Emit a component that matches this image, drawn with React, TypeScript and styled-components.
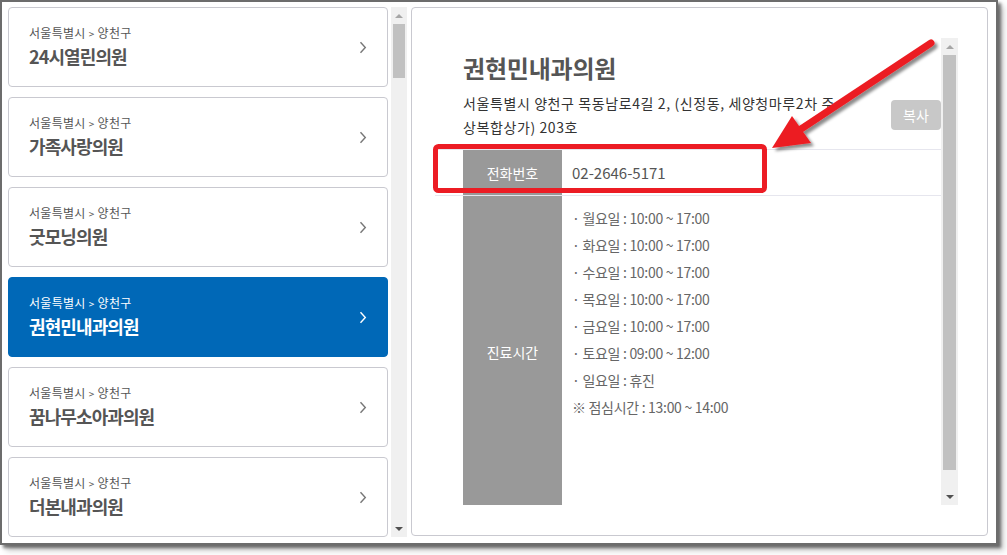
import React from 'react';
import styled, { createGlobalStyle } from 'styled-components';

const GlobalStyle = createGlobalStyle`
    * {
        box-sizing: border-box;
    }
    body {
        margin: 0;
        background: #fff;
        font-family: "Noto Sans CJK KR", "Noto Sans", sans-serif;
    }
`;

const Page = styled.div`
    position: relative;
    width: 1007px;
    height: 555px;
    overflow: hidden;
`;

const Frame = styled.div`
    width: 998px;
    height: 545px;
    border: 2px solid #6c6c6c;
    background: #fff;
    box-shadow: 3px 3px 3px rgba(0,0,0,0.5), 6px 6px 6px rgba(0,0,0,0.18);
    display: flex;
    align-items: flex-start;
    padding: 5px 0 0 6px;
    overflow: hidden;
`;

const ListColumn = styled.div`
    display: flex;
    height: 530px;
    overflow: hidden;
`;

const CardList = styled.div`
    width: 380px;
    display: flex;
    flex-direction: column;
    gap: 10px;
`;

const Card = styled.div<{ $active?: boolean }>`
    flex: 0 0 80px;
    border: 1px solid ${p => (p.$active ? '#0068b7' : '#c9c9d0')};
    border-radius: 4px;
    background: ${p => (p.$active ? '#0068b7' : '#fff')};
    color: ${p => (p.$active ? '#fff' : '#555')};
    padding: 0 20px;
    display: flex;
    align-items: center;
    justify-content: space-between;
`;

const CardText = styled.div`
    display: flex;
    flex-direction: column;
    gap: 1px;
    margin-bottom: 2px;
`;

const Region = styled.span`
    font-size: 12px;
    line-height: 18px;
    letter-spacing: 0.3px;
`;

const Small = styled.span`
    font-size: 10px;
`;

const ClinicName = styled.span`
    font-size: 18px;
    line-height: 24px;
    font-weight: 700;
    letter-spacing: -0.9px;
`;

const Track = styled.div<{ $width: number }>`
    width: ${p => p.$width}px;
    background: #f0f0f0;
    display: flex;
    flex-direction: column;
    align-items: center;
    flex-shrink: 0;
`;

const ArrowZone = styled.div`
    height: 17px;
    width: 100%;
    display: flex;
    align-items: center;
    justify-content: center;
`;

const Triangle = styled.div<{ $down?: boolean }>`
    width: 0;
    height: 0;
    border-left: 4px solid transparent;
    border-right: 4px solid transparent;
    ${p => (p.$down
        ? 'border-top: 4px solid #505050;'
        : 'border-bottom: 4px solid #a6a6a6;')}
`;

const Thumb = styled.div<{ $height: number }>`
    width: calc(100% - 4px);
    height: ${p => p.$height}px;
    background: #c1c1c1;
`;

const Spacer = styled.div`
    flex: 1;
`;

const Gap = styled.div`
    width: 3px;
    flex-shrink: 0;
`;

const DetailPanel = styled.div`
    margin-left: 4px;
    width: 577px;
    height: 529px;
    border: 1px solid #c9c9d0;
    border-radius: 4px;
    padding: 30px 29px 29px 23px;
    display: flex;
`;

const ScrollArea = styled.div`
    flex: 1;
    display: flex;
    height: 467px;
`;

const Content = styled.div`
    flex: 1;
    overflow: hidden;
    padding-top: 15px;
`;

const Title = styled.h2`
    margin: 0 0 8px 28px;
    font-size: 24px;
    line-height: 30px;
    font-weight: 700;
    color: #555;
    letter-spacing: -0.2px;
`;

const AddressRow = styled.div`
    display: flex;
    align-items: center;
    justify-content: space-between;
    padding-left: 28px;
    margin-bottom: 10px;
`;

const Address = styled.p`
    margin: 0;
    font-size: 14px;
    line-height: 24px;
    color: #333;
    letter-spacing: 0.6px;
`;

const CopyButton = styled.button`
    width: 50px;
    height: 30px;
    border: none;
    border-radius: 4px;
    background: #c8c8c8;
    color: #fff;
    font-family: inherit;
    font-size: 14px;
    padding: 0;
`;

const InfoTable = styled.div`
    border-top: 1px solid #e6e6ee;
`;

const InfoRow = styled.div`
    display: flex;
    padding-left: 28px;
    border-bottom: 1px solid #e6e6ee;
`;

const InfoHead = styled.div`
    width: 99px;
    flex-shrink: 0;
    background: #999;
    color: #fff;
    font-size: 14px;
    display: flex;
    align-items: center;
    justify-content: center;
`;

const InfoCell = styled.div<{ $pad: string }>`
    padding: ${p => p.$pad};
    color: #555;
    font-size: 14px;
    letter-spacing: -0.3px;
`;

const Phone = styled.span`
    display: block;
    font-size: 15px;
    line-height: 25px;
    letter-spacing: 0;
`;

const HourLine = styled.div`
    line-height: 27px;
    color: #666;
`;

const Overlay = styled.svg`
    position: absolute;
    left: 0;
    top: 0;
    pointer-events: none;
`;

const clinics = [
    '24시열린의원',
    '가족사랑의원',
    '굿모닝의원',
    '권현민내과의원',
    '꿈나무소아과의원',
    '더본내과의원',
];

const hours = [
    '· 월요일 : 10:00 ~ 17:00',
    '· 화요일 : 10:00 ~ 17:00',
    '· 수요일 : 10:00 ~ 17:00',
    '· 목요일 : 10:00 ~ 17:00',
    '· 금요일 : 10:00 ~ 17:00',
    '· 토요일 : 09:00 ~ 12:00',
    '· 일요일 : 휴진',
    '※ 점심시간 : 13:00 ~ 14:00',
];

const Chevron = ({ color }: { color: string }) => (
    <svg width="8" height="13" viewBox="0 0 8 13">
        <path d="M1.5 1.2 L6.3 6.5 L1.5 11.8" fill="none" stroke={color} strokeWidth="1.4" />
    </svg>
);

const ScrollBar = ({ width, thumb }: { width: number; thumb: number }) => (
    <Track $width={width}>
        <ArrowZone><Triangle /></ArrowZone>
        <Thumb $height={thumb} />
        <Spacer />
        <ArrowZone><Triangle $down /></ArrowZone>
    </Track>
);

export default function App() {
    const selected = '권현민내과의원';

    return (
        <Page>
            <GlobalStyle />
            <Frame>
                <ListColumn>
                    <CardList>
                        {clinics.map(name => {
                            const active = name === selected;
                            return (
                                <Card key={name} $active={active}>
                                    <CardText>
                                        <Region>서울특별시 <Small>&gt;</Small> 양천구</Region>
                                        <ClinicName>{name}</ClinicName>
                                    </CardText>
                                    <Chevron color={active ? '#fff' : '#777'} />
                                </Card>
                            );
                        })}
                    </CardList>
                    <Gap />
                    <ScrollBar width={16} thumb={54} />
                </ListColumn>

                <DetailPanel>
                    <ScrollArea>
                        <Content>
                            <Title>권현민내과의원</Title>
                            <AddressRow>
                                <Address>
                                    서울특별시 양천구 목동남로4길 2, (신정동, 세양청마루2차 주<br />
                                    상복합상가) 203호
                                </Address>
                                <CopyButton>복사</CopyButton>
                            </AddressRow>
                            <InfoTable>
                                <InfoRow>
                                    <InfoHead>전화번호</InfoHead>
                                    <InfoCell $pad="10px 10px 10px 10px">
                                        <Phone>02-2646-5171</Phone>
                                    </InfoCell>
                                </InfoRow>
                                <InfoRow>
                                    <InfoHead>진료시간</InfoHead>
                                    <InfoCell $pad="9px 10px 87px 10px">
                                        {hours.map(h => <HourLine key={h}>{h}</HourLine>)}
                                    </InfoCell>
                                </InfoRow>
                            </InfoTable>
                        </Content>
                        <ScrollBar width={17} thumb={415} />
                    </ScrollArea>
                </DetailPanel>
            </Frame>

            <Overlay width="1007" height="555" viewBox="0 0 1007 555">
                <defs>
                    <filter id="arrowShadow" x="-20%" y="-20%" width="140%" height="140%">
                        <feDropShadow dx="3" dy="3" stdDeviation="1.5" floodColor="#000" floodOpacity="0.45" />
                    </filter>
                </defs>
                <rect x="435.5" y="146.5" width="329" height="44" rx="3" fill="none" stroke="#ec1c24" strokeWidth="5" />
                <g filter="url(#arrowShadow)">
                    <line x1="931" y1="43" x2="798" y2="131" stroke="#ec1c24" strokeWidth="7" strokeLinecap="round" />
                    <polygon points="772,148 792,116 811,143" fill="#ec1c24" />
                </g>
            </Overlay>
        </Page>
    );
}
